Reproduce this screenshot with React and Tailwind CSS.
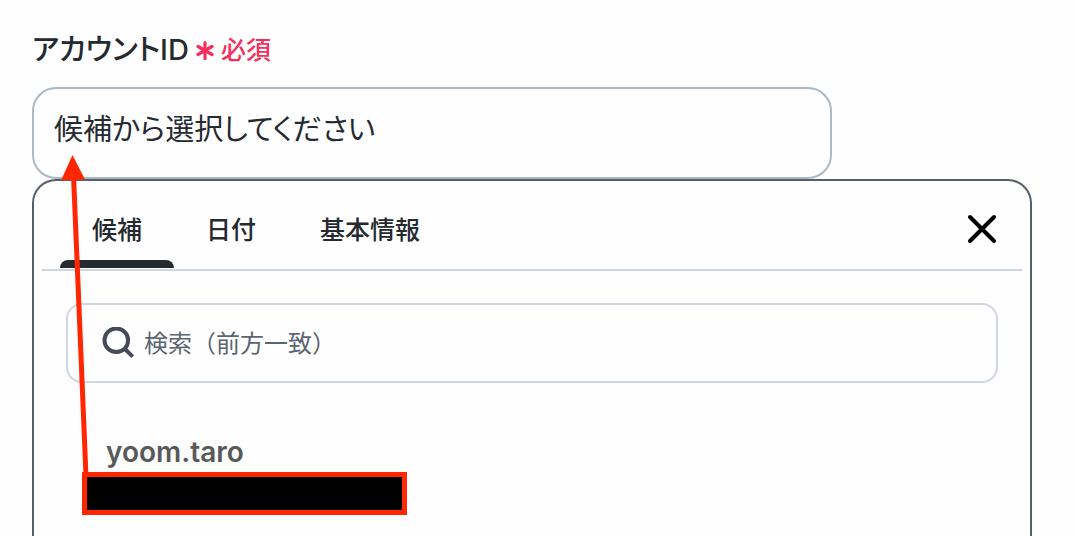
import React, { useState } from 'react';

const tabs = ['候補', '日付', '基本情報'];

const CloseIcon = () => (
  <svg className="h-8 w-8" viewBox="0 0 32 32" fill="none" stroke="currentColor" strokeWidth="4" strokeLinecap="round" aria-hidden="true">
    <path d="M4 4L28 28M28 4L4 28" />
  </svg>
);

const SearchIcon = () => (
  <svg className="h-8 w-8 shrink-0 text-[#454c56]" viewBox="0 0 32 32" fill="none" stroke="currentColor" strokeWidth="4" aria-hidden="true">
    <circle cx="14.3" cy="13.3" r="11.8" />
    <path d="M22.5 21.5L30.7 29.7" />
  </svg>
);

const RequiredMark = () => (
  <svg className="h-5 w-5" viewBox="0 0 20 20" fill="none" stroke="currentColor" strokeWidth="3.2" strokeLinecap="round" aria-hidden="true">
    <path d="M10 2.5V18.5M3 6.5L17 14.5M17 6.5L3 14.5" />
  </svg>
);

const Pointer = () => (
  <svg className="pointer-events-none absolute -top-[26px] left-6 h-[324px] w-9" viewBox="0 0 36 324" aria-hidden="true">
    <path d="M15.5 20L28 321" stroke="#ff2600" strokeWidth="5" fill="none" />
    <path d="M14.5 0L27 24.5L3 25.5Z" fill="#ff2600" />
  </svg>
);

const App = () => {
  const [activeTab, setActiveTab] = useState('候補');
  const [account, setAccount] = useState('候補から選択してください');
  const [query, setQuery] = useState('');

  return (
    <main className="flex min-h-screen flex-col bg-[#fefefe] pt-8 pr-11 pl-8 font-['Inter','Noto_Sans_CJK_JP',sans-serif] text-[#252a31]">
      {/* Field label */}
      <div className="mb-[19px] flex h-9 items-center gap-1.5">
        <label htmlFor="account" className="text-[29px] leading-9 font-medium [font-feature-settings:'palt']">
          アカウントID
        </label>
        <span className="flex items-center gap-1.5 text-[25px] leading-9 font-medium text-[#f52f5c]">
          <RequiredMark />
          必須
        </span>
      </div>

      <input
        id="account"
        type="text"
        value={account}
        onChange={(e) => setAccount(e.target.value)}
        className="h-[92px] w-4/5 shrink-0 rounded-3xl border-2 border-[#adb7c3] px-5 pb-3 text-[29px] outline-none [font-feature-settings:'palt']"
      />

      {/* Suggestion panel */}
      <section className="relative flex-1 rounded-t-3xl border-2 border-b-0 border-[#56606d]">
        <div className="mx-2 flex h-[90px] items-center justify-between border-b-2 border-[#cfd6e2] pr-6 pl-[18px]">
          <div role="tablist" className="flex h-[87px] self-start">
            {tabs.map((tab) => (
              <button
                key={tab}
                type="button"
                role="tab"
                aria-selected={activeTab === tab}
                onClick={() => setActiveTab(tab)}
                className="flex flex-col text-[25px] font-medium"
              >
                <span className="flex flex-1 items-center px-8 pt-5">{tab}</span>
                <span className={`h-2 w-full rounded-t-lg ${activeTab === tab ? 'bg-[#252a31]' : ''}`} />
              </button>
            ))}
          </div>
          <button type="button" aria-label="閉じる" className="pt-2 text-black">
            <CloseIcon />
          </button>
        </div>

        <div className="px-8 pt-8">
          <label className="flex h-20 items-center gap-2.5 rounded-2xl border-2 border-[#cfd6e2] px-[34px]">
            <SearchIcon />
            <input
              type="search"
              aria-label="検索"
              placeholder="検索（前方一致）"
              value={query}
              onChange={(e) => setQuery(e.target.value)}
              className="min-w-0 flex-1 pt-0.5 text-2xl outline-none placeholder:text-[#5b6470]"
            />
          </label>
        </div>

        {/* Candidates */}
        <ul className="px-12 pt-[51px]">
          <li>
            <button type="button" className="block px-6 text-[28px] leading-9 font-semibold text-[#595959]">
              yoom.taro
            </button>
            <div className="mt-0.5 h-[43px] w-[325px] border-5 border-[#ff2600] bg-black" />
          </li>
        </ul>

        <Pointer />
      </section>
    </main>
  );
};

export default App;
